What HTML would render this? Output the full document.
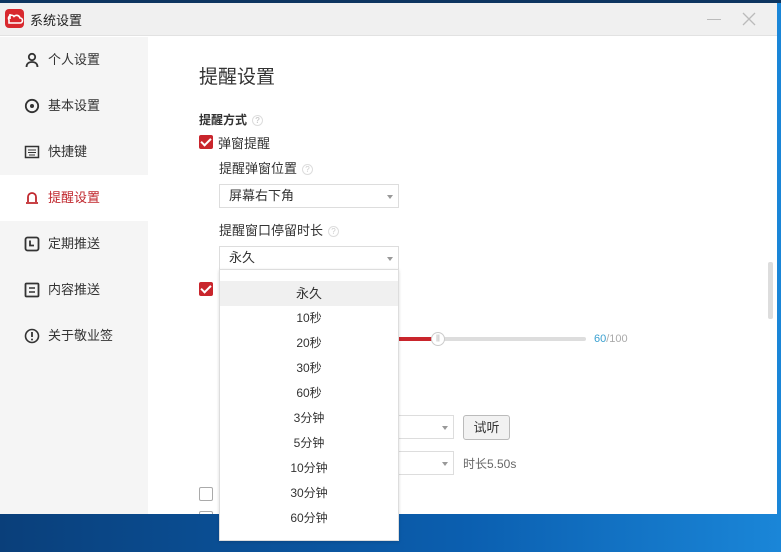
<!DOCTYPE html>
<html><head><meta charset="utf-8"><style>
*{margin:0;padding:0;box-sizing:border-box}
body{width:781px;height:552px;overflow:hidden;background:linear-gradient(90deg,#0a3f7a,#0b5fb0 60%,#1a86d8);font-family:"Liberation Sans","Noto Sans CJK SC",sans-serif;font-size:13px;color:#333;position:relative}
.abs{position:absolute}
#win{left:0;top:3px;width:777px;height:511px;background:#fff;overflow:hidden}
#title{left:0;top:0;width:777px;height:33px;background:#f0f0f0;border-bottom:1px solid #e2e2e2}
#side{left:0;top:34px;width:148px;height:480px;background:#f5f5f5}
.item{position:absolute;left:0;width:148px;height:46px;line-height:46px;padding-left:48px;color:#333}
.item.act{background:#fff;color:#c0272d}
.ic{position:absolute;left:24px;top:15px;width:16px;height:16px}
.cb{position:absolute;width:14px;height:14px;background:#c9252c;border-radius:2px}
.cb:after{content:"";position:absolute;left:4px;top:1px;width:4px;height:8px;border:solid #fff;border-width:0 2px 2px 0;transform:rotate(45deg)}
.cbe{position:absolute;width:14px;height:14px;border:1px solid #aaa;border-radius:2px;background:#fff}
.q{display:inline-block;width:11px;height:11px;border:1px solid #ddd;border-radius:50%;font-size:8px;line-height:9px;text-align:center;color:#ccc;vertical-align:1px;margin-left:5px}
.sel{position:absolute;height:24px;border:1px solid #ddd;background:#fff;line-height:22px;padding-left:9px}
.sel:after{content:"";position:absolute;right:5px;top:10px;border:3px solid transparent;border-top:4px solid #999}
.opt{position:absolute;left:0;width:178px;height:25px;line-height:25px;text-align:center;font-size:12px;color:#333}
</style></head><body>
<div class="abs" style="left:0;top:0;width:781px;height:3px;background:#0d3560"></div>
<div id="win" class="abs">
 <div id="title" class="abs">
  <div class="abs" style="left:5px;top:6px;width:19px;height:19px;background:#d8282e;border-radius:4px"><svg width="19" height="19" viewBox="0 0 19 19"><path d="M4 14h11a2.5 2.5 0 0 0 0-5 3.5 3.5 0 0 0-6-1.5A3 3 0 0 0 4 11z" fill="none" stroke="#fff" stroke-width="1.6"/><path d="M5 5v5" stroke="#fff" stroke-width="1.6"/></svg></div>
  <div class="abs" style="left:30px;top:7px;font-size:13px;color:#222">系统设置</div>
  <div class="abs" style="left:707px;top:16px;width:14px;height:1px;background:#bbb"></div>
  <svg class="abs" style="left:742px;top:9px" width="14" height="14"><path d="M1 1L13 13M13 1L1 13" stroke="#bbb" stroke-width="1.3"/></svg>
 </div>
 <div id="side" class="abs">
  <div class="item" style="top:0px"><svg class="ic" viewBox="0 0 16 16"><circle cx="8" cy="5" r="3.2" fill="none" stroke="#333" stroke-width="1.8"/><path d="M2.5 15c0-3.5 2.5-5 5.5-5s5.5 1.5 5.5 5" fill="none" stroke="#333" stroke-width="1.8"/></svg>个人设置</div>
  <div class="item" style="top:46px"><svg class="ic" viewBox="0 0 16 16"><circle cx="8" cy="8" r="6.2" fill="none" stroke="#333" stroke-width="1.8"/><circle cx="8" cy="8" r="2" fill="#333"/></svg>基本设置</div>
  <div class="item" style="top:92px"><svg class="ic" viewBox="0 0 16 16"><rect x="1.5" y="2.5" width="13" height="11" fill="none" stroke="#333" stroke-width="1.5"/><path d="M4 6h8M4 8.5h8M5 11h6" stroke="#333" stroke-width="1"/></svg>快捷键</div>
  <div class="item act" style="top:138px"><svg class="ic" viewBox="0 0 16 16"><path d="M4 12V7a4 4 0 0 1 8 0v5M2 13h12" fill="none" stroke="#c0272d" stroke-width="1.8"/></svg>提醒设置</div>
  <div class="item" style="top:184px"><svg class="ic" viewBox="0 0 16 16"><rect x="1.5" y="1.5" width="13" height="13" rx="2" fill="none" stroke="#333" stroke-width="1.8"/><path d="M6 4.5v5h4" fill="none" stroke="#333" stroke-width="1.8"/></svg>定期推送</div>
  <div class="item" style="top:230px"><svg class="ic" viewBox="0 0 16 16"><rect x="1.5" y="1.5" width="13" height="13" rx="1" fill="none" stroke="#333" stroke-width="1.8"/><path d="M5 6h6M5 10h6" stroke="#333" stroke-width="1.6"/></svg>内容推送</div>
  <div class="item" style="top:276px"><svg class="ic" viewBox="0 0 16 16"><circle cx="8" cy="8" r="6.5" fill="none" stroke="#333" stroke-width="1.6"/><path d="M8 4v5" stroke="#333" stroke-width="1.8"/><circle cx="8" cy="11.5" r="1" fill="#333"/></svg>关于敬业签</div>
 </div>
 <div class="abs" style="left:199px;top:59px;font-size:19px;color:#333">提醒设置</div>
 <div class="abs" style="left:199px;top:108px;font-weight:bold;font-size:12px">提醒方式<span class="q">?</span></div>
 <div class="cb" style="left:199px;top:132px"></div>
 <div class="abs" style="left:218px;top:130px">弹窗提醒</div>
 <div class="abs" style="left:219px;top:155px">提醒弹窗位置<span class="q">?</span></div>
 <div class="sel" style="left:219px;top:181px;width:180px">屏幕右下角</div>
 <div class="abs" style="left:219px;top:217px">提醒窗口停留时长<span class="q">?</span></div>
 <div class="sel" style="left:219px;top:243px;width:180px">永久</div>
 <div class="cb" style="left:199px;top:279px"></div>
 <div class="abs" style="left:398px;top:334px;width:40px;height:4px;background:#c9252c"></div>
 <div class="abs" style="left:438px;top:334px;width:148px;height:4px;background:#ddd;border-radius:2px"></div>
 <div class="abs" style="left:431px;top:329px;width:14px;height:14px;border:1px solid #ccc;border-radius:50%;background:#fff;font-size:7px;line-height:12px;text-align:center;color:#999">||</div>
 <div class="abs" style="left:594px;top:330px;font-size:11px;color:#aaa"><span style="color:#3aa0d0">60</span>/100</div>
 <div class="sel" style="left:380px;top:412px;width:74px"></div>
 <div class="abs" style="left:463px;top:412px;width:47px;height:25px;border:1px solid #bbb;border-radius:3px;background:#f2f2f2;text-align:center;line-height:23px">试听</div>
 <div class="sel" style="left:380px;top:448px;width:74px"></div>
 <div class="abs" style="left:463px;top:452px;font-size:12px;color:#666">时长5.50s</div>
 <div class="cbe" style="left:199px;top:484px"></div>
 <div class="cbe" style="left:199px;top:508px"></div>
 <div class="abs" style="left:768px;top:259px;width:5px;height:57px;background:#ddd;border-radius:2px"></div>
</div>
<div class="abs" style="left:219px;top:269px;width:180px;height:272px;background:#fff;border:1px solid #ddd;box-shadow:0 1px 3px rgba(0,0,0,.15)">
 <div class="opt" style="top:11px;background:#f0f0f0;font-size:13px">永久</div>
 <div class="opt" style="top:36px">10秒</div>
 <div class="opt" style="top:61px">20秒</div>
 <div class="opt" style="top:86px">30秒</div>
 <div class="opt" style="top:111px">60秒</div>
 <div class="opt" style="top:136px">3分钟</div>
 <div class="opt" style="top:161px">5分钟</div>
 <div class="opt" style="top:186px">10分钟</div>
 <div class="opt" style="top:211px">30分钟</div>
 <div class="opt" style="top:236px">60分钟</div>
</div>
</body></html>
